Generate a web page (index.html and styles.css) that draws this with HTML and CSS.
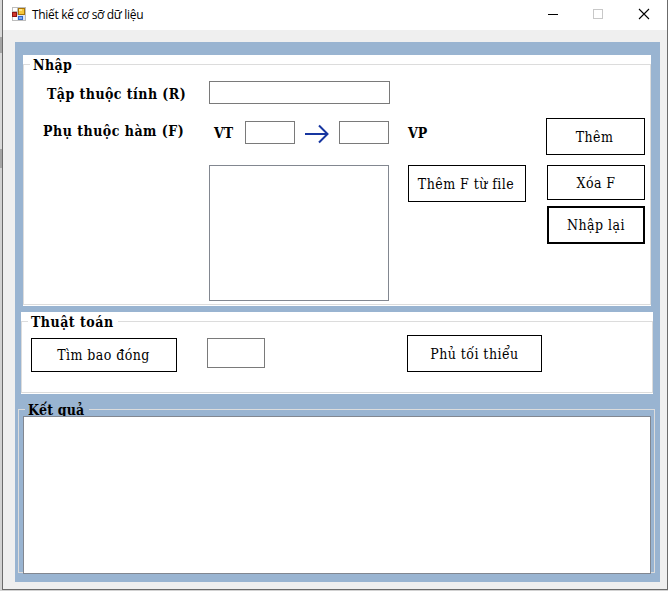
FILE: index.html
```html
<!DOCTYPE html>
<html lang="vi">
<head>
<meta charset="utf-8">
<title>Thiết kế cơ sỡ dữ liệu</title>
<link rel="stylesheet" href="styles.css">
</head>
<body>
<div class="window">
  <header class="titlebar">
    <svg class="app-icon" width="14" height="14" viewBox="0 0 14 14" shape-rendering="crispEdges">
      <rect width="14" height="14" fill="#bdbdbd"/>
      <path d="M1 1h4v3H1zM1 10h4v3H1z" fill="#fff"/>
      <rect x="5" y="8" width="8" height="5" fill="#dce6f7"/>
      <rect x="0" y="5" width="5" height="5" fill="#8f1414"/>
      <rect x="1" y="6" width="3" height="3" fill="#d0382c"/>
      <rect x="6" y="1" width="7" height="7" fill="#a87409"/>
      <rect x="7" y="2" width="5" height="5" fill="#f6c73c"/>
      <rect x="7" y="2" width="3" height="2" fill="#ffe58a"/>
      <rect x="6" y="9" width="5" height="4" fill="#3268c9"/>
      <rect x="7" y="10" width="3" height="2" fill="#7ea9f2"/>
    </svg>
    <span class="caption">Thiết kế cơ sỡ dữ liệu</span>
    <svg class="controls" width="101" height="10" viewBox="0 0 101 10" fill="none">
      <path d="M0 5.5h10" stroke="#000"/>
      <rect x="45.500" y=".5" width="9" height="9" stroke="#c8c8c8"/>
      <path d="M91 0l10 10M101 0L91 10" stroke="#000" stroke-width="1.100"/>
    </svg>
  </header>
  <main class="panel">
    <section class="group input-group">
      <fieldset>
        <legend class="nhap">Nhập</legend>
        <div class="row first">
          <span class="label attrs">Tập thuộc tính (R)</span>
          <div class="box wide"></div>
        </div>
        <div class="row second">
          <span class="label deps">Phụ thuộc hàm (F)</span>
          <span class="label vt">VT</span>
          <div class="box small"></div>
          <svg class="arrow" width="24" height="20" viewBox="0 0 24 20" fill="none" stroke="#1736a0" stroke-width="2">
            <path d="M0 10h23M14 1.500L22.500 10L14 18.500"/>
          </svg>
          <div class="box small"></div>
          <span class="label vp">VP</span>
          <div class="btn them"><span>Thêm</span></div>
        </div>
        <div class="row third">
          <div class="box list"></div>
          <div class="btn from-file"><span>Thêm F từ file</span></div>
          <div class="stack">
            <div class="btn xoa"><span>Xóa F</span></div>
            <div class="btn reset"><span>Nhập lại</span></div>
          </div>
        </div>
      </fieldset>
    </section>
    <section class="group algo-group">
      <fieldset>
        <legend class="algo">Thuật toán</legend>
        <div class="row algos">
          <div class="btn closure"><span>Tìm bao đóng</span></div>
          <div class="box set"></div>
          <div class="btn cover"><span>Phủ tối thiểu</span></div>
        </div>
      </fieldset>
    </section>
    <section class="result-group">
      <fieldset>
        <legend class="result">Kết quả</legend>
        <div class="output"></div>
      </fieldset>
    </section>
  </main>
</div>
</body>
</html>
```
FILE: styles.css
```css
* { box-sizing: border-box; }
body {
  margin: 0;
  width: 668px;
  height: 591px;
  padding-left: 2px;
  overflow: hidden;
  background: linear-gradient(#d9d9d9 0 37px, #a5a5a5 37px 53px, #d9d9d9 53px 149px, #a5a5a5 149px 168px, #d2d2d2 168px);
  color: #000;
  font: 14px/19px "DejaVu Serif Condensed", "DejaVu Serif", serif;
  font-stretch: condensed;
}
.window {
  width: 666px;
  height: 590px;
  background: #efefef;
  border: 1px solid #6b6b6b;
  border-top: 0;
}
.titlebar {
  height: 30px;
  background: #fff;
  display: flex;
  align-items: center;
  padding: 0 18px 2px 9px;
}
.app-icon { margin-right: 6px; }
.caption {
  font: 12px/20px "Open Sans", "Noto Sans", sans-serif;
  letter-spacing: -0.32px;
  white-space: nowrap;
  padding-top: 2px;
}
.controls { margin-left: auto; overflow: visible; }
.panel {
  margin: 12px 0 0 12px;
  width: 645px;
  height: 540px;
  padding: 13px 0 0;
  background: #99b4d1;
}
fieldset {
  margin: 0;
  padding: 0;
  border: 1px solid #dcdcdc;
  min-width: 0;
}
legend {
  height: 19px;
  margin-left: 6px;
  padding: 1px 3px 0;
  font-weight: bold;
  white-space: nowrap;
}
.group { background: #fff; }
.input-group { width: 628px; height: 251px; margin-left: 8px; }
.input-group fieldset { height: 250px; }
.algo-group { width: 632px; height: 82px; margin: 6px 0 0 6px; }
.algo-group fieldset { height: 81px; }
.result-group { width: 637px; margin: 6px 0 0 3px; }
.result-group fieldset { height: 173px; }
.nhap { width: 46px; letter-spacing: 0.4px; }
.algo { width: 90px; letter-spacing: 0.5px; }
.result { width: 64px; margin-left: 6px; letter-spacing: 0.15px; }
.row { display: flex; align-items: flex-start; }
.box { border: 1px solid #7a7a7a; background: #fff; flex: none; }
.label { font-weight: bold; white-space: nowrap; flex: none; }
.btn {
  display: flex;
  align-items: center;
  justify-content: center;
  flex: none;
  border: 1px solid #000;
  background: #fff;
  letter-spacing: 0.45px;
  padding-top: 1px;
  white-space: nowrap;
}
.first { padding-top: 7px; height: 44px; }
.attrs { width: 162px; margin: 4px 0 0 23px; letter-spacing: 0.45px; }
.wide { width: 181px; height: 23px; }
.second { height: 47px; }
.deps { width: 171px; margin: 4px 0 0 19px; letter-spacing: 0.5px; }
.vt { width: 31px; margin-top: 6px; }
.small { width: 50px; height: 23px; margin-top: 3px; }
.arrow { margin: 6px 10px 0; }
.vp { width: 138px; margin: 6px 0 0 19px; }
.them { width: 99px; height: 37px; padding: 2px 2px 0 0; }
.third { padding-left: 185px; }
.list { width: 180px; height: 136px; border-color: #828790; }
.from-file { width: 118px; height: 37px; margin-left: 19px; padding: 2px 2px 0 0; }
.stack { display: flex; flex-direction: column; gap: 6px; margin-left: 21px; }
.xoa { width: 98px; height: 35px; padding-top: 2px; }
.reset { width: 98px; height: 38px; border-width: 2px; padding-top: 0; }
.algos { padding: 4px 0 0 9px; }
.closure { width: 146px; height: 34px; margin-top: 3px; padding: 0 1px 0 0; }
.set { width: 58px; height: 30px; margin: 3px 142px 0 30px; }
.cover { width: 135px; height: 37px; padding-top: 2px; }
.output {
  position: relative;
  width: 628px;
  height: 158px;
  margin: -3px 0 0 4px;
  border: 1px solid #828790;
  background: #fff;
}
```
